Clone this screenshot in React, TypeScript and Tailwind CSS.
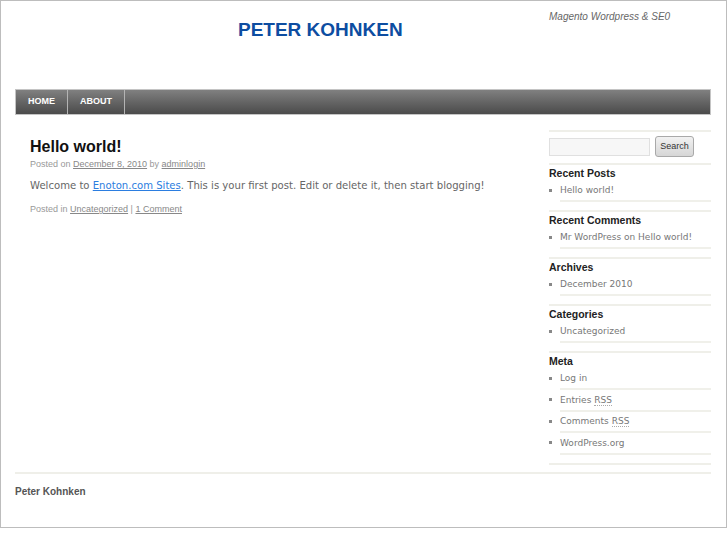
const sidebar = [
  { title: 'Recent Posts', items: [{ text: 'Hello world!' }] },
  { title: 'Recent Comments', items: [{ text: 'Mr WordPress on Hello world!' }] },
  { title: 'Archives', items: [{ text: 'December 2010' }] },
  { title: 'Categories', items: [{ text: 'Uncategorized' }] },
  {
    title: 'Meta',
    items: [
      { text: 'Log in' },
      { text: 'Entries', abbr: 'RSS' },
      { text: 'Comments', abbr: 'RSS' },
      { text: 'WordPress.org' },
    ],
  },
];

const sans = "font-['Liberation_Sans',Arial,sans-serif]";

export default function App() {
  return (
    <div className="w-[727px] h-[545px] bg-white">
      <div className="w-full h-[528px] border border-[#bdbdbd] pl-[14px] pr-[15px]">
        {/* Header */}
        <div className="flex h-[88px]">
          <div className="flex-1 pl-[223px] pt-[18px]">
            <h1 className={`${sans} text-[19px] leading-[22px] font-bold text-[#0d4da1]`}>PETER KOHNKEN</h1>
          </div>
          <div className="w-[162px] shrink-0 pt-[9px]">
            <p className={`${sans} italic text-[10px] leading-[14px] text-[#666]`}>Magento Wordpress &amp; SE0</p>
          </div>
        </div>

        {/* Nav */}
        <div className="flex h-[26px] border border-[#c4c4c4] bg-gradient-to-b from-[#808080] to-[#4b4b4b]">
          {['Home', 'About'].map((label) => (
            <div
              key={label}
              className={`${sans} flex items-center px-3 border-r border-[#b4b4b4] text-[9px] font-bold uppercase text-white`}
            >
              {label}
            </div>
          ))}
        </div>

        {/* Body */}
        <div className="flex">
          <div className="flex-1 pl-[15px] pt-[22px]">
            <h2 className={`${sans} text-[16px] leading-[20px] font-bold text-[#111]`}>Hello world!</h2>
            <p className={`${sans} mt-[1px] text-[9px] leading-[12px] text-[#999]`}>
              Posted on <span className="underline text-[#888]">December 8, 2010</span> by{' '}
              <span className="underline text-[#888]">adminlogin</span>
            </p>
            <p className="mt-[8px] font-['DejaVu_Sans',sans-serif] text-[10.1px] leading-[16px] text-[#666]">
              Welcome to <span className="underline text-[#2b7de0]">Enoton.com Sites</span>. This is your first post.
              Edit or delete it, then start blogging!
            </p>
            <p className={`${sans} mt-[9px] text-[9px] leading-[12px] text-[#999]`}>
              Posted in <span className="underline text-[#888]">Uncategorized</span> |{' '}
              <span className="underline text-[#888]">1 Comment</span>
            </p>
          </div>

          <div className="w-[162px] shrink-0 pt-[15px]">
            <div className="h-[2px] bg-[#efefe9]" />
            <div className="mt-[4px] flex h-[21px] items-center gap-[5px]">
              <div className="h-[18px] w-[101px] border border-[#e0e0e0] bg-[#f7f7f7]" />
              <button
                className={`${sans} h-[21px] w-[39px] rounded-[3px] border border-[#a9a9a9] bg-gradient-to-b from-[#f2f2f2] to-[#d6d6d6] text-[9px] text-[#333]`}
              >
                Search
              </button>
            </div>
            <div className="mt-[6px] h-[2px] bg-[#efefe9]" />

            {sidebar.map((section) => (
              <div key={section.title} className="pt-[1px]">
                <h3 className={`${sans} text-[10.5px] leading-[14px] font-bold text-[#222]`}>{section.title}</h3>
                <ul className="mt-[2px] flex flex-col gap-[1.5px]">
                  {section.items.map((item) => (
                    <li key={item.text} className="flex">
                      <span className="flex h-[16px] w-[11px] shrink-0 items-center">
                        <span className="h-[3px] w-[3px] bg-[#888]" />
                      </span>
                      <div className="flex-1 border-b-2 border-[#f0f0ea] pb-[2px] font-['DejaVu_Sans',sans-serif] text-[9px] leading-[16px] text-[#777]">
                        {item.text}
                        {item.abbr && (
                          <>
                            {' '}
                            <span className="border-b border-dotted border-[#aaa]">{item.abbr}</span>
                          </>
                        )}
                      </div>
                    </li>
                  ))}
                </ul>
                <div className="mt-[8px] h-[2px] bg-[#efefe9]" />
              </div>
            ))}
          </div>
        </div>

        {/* Footer */}
        <div className="mt-[7px] h-[2px] bg-[#efefe9]" />
        <p className={`${sans} mt-[11px] text-[10px] leading-[14px] font-bold text-[#555]`}>Peter Kohnken</p>
      </div>
    </div>
  );
}
